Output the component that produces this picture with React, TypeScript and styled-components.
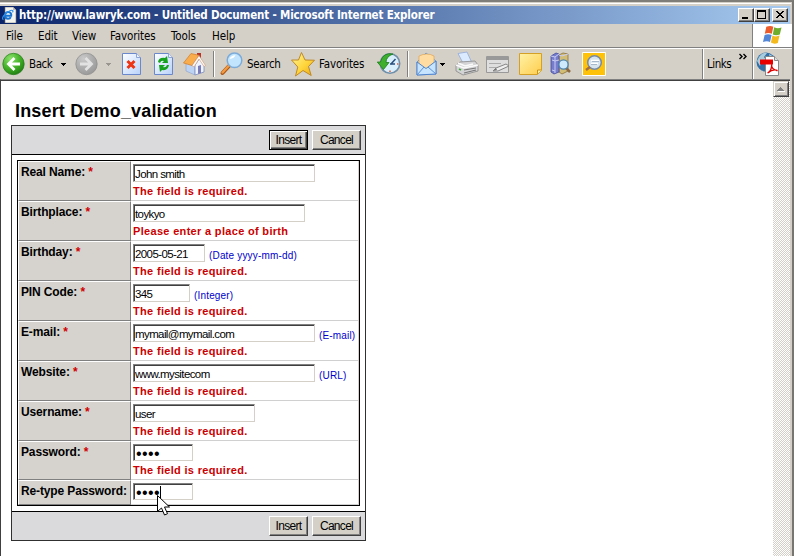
import React from "react";
import styled, { createGlobalStyle } from "styled-components";

const Global = createGlobalStyle`
  * { box-sizing: border-box; }
  html, body { margin: 0; padding: 0; overflow: hidden; }
  body { width: 794px; height: 556px; background: #d4d0c8; font-family: "Liberation Sans", Arial, sans-serif; color: #000; }
`;

const Window = styled.div`
  width: 794px;
  height: 556px;
  display: flex;
  flex-direction: column;
  background: #d4d0c8;
  border-top: 2px solid #807e79;
  border-right: 2px solid #77756f;
  overflow: hidden;
`;

const TitleBar = styled.header`
  height: 22px;
  flex: none;
  margin-right: 1px;
  border-top: 1px solid #d4d0c8;
  box-shadow: inset 0 1px #fff;
  padding-top: 3px;
`;

const TitleStrip = styled.div`
  height: 18px;
  width: 790px;
  display: flex;
  align-items: center;
  padding: 0 2px 0 1px;
  background: linear-gradient(90deg, #0a246a, #a6caf0);
`;

const Title = styled.h1`
  flex: 1;
  margin: 0 0 0 2px;
  font: bold 11.5px/18px "DejaVu Sans Condensed", "DejaVu Sans", sans-serif;
  letter-spacing: -0.16px;
  color: #fff;
  white-space: nowrap;
`;

const CaptionButton = styled.button<{ $gap?: number }>`
  width: 16px;
  height: 14px;
  margin: 0 0 0 ${(p) => p.$gap ?? 0}px;
  padding: 0;
  display: flex;
  border: 1px solid;
  border-color: #fff #404040 #404040 #fff;
  box-shadow: inset -1px -1px #808080;
  background: #d4d0c8;
`;

const MenuBar = styled.nav`
  height: 24px;
  flex: none;
  display: flex;
  border-bottom: 1px solid #808080;
`;

const MenuItem = styled.span<{ $width: number }>`
  width: ${(p) => p.$width}px;
  font: 11.5px/25px "DejaVu Sans Condensed", "DejaVu Sans", sans-serif;
  letter-spacing: -0.12px;
  white-space: nowrap;
`;

const MenuItems = styled.div`
  flex: 1;
  display: flex;
  padding-left: 6px;
`;

const LogoPane = styled.div`
  width: 40px;
  height: 23px;
  border-left: 1px solid #808080;
  background: #fff;
  padding-left: 8px;
`;

const ToolBar = styled.div`
  height: 31px;
  flex: none;
  display: flex;
  align-items: center;
  border-top: 1px solid #fff;
`;

const Tool = styled.span<{ $width: number; $gap?: number }>`
  display: block;
  flex: none;
  width: ${(p) => p.$width}px;
  height: 26px;
  margin-left: ${(p) => p.$gap ?? 0}px;
  svg { display: block; overflow: visible; }
`;

const ToolText = styled.span<{ $width: number; $gap: number; $track?: number }>`
  flex: none;
  width: ${(p) => p.$width}px;
  margin-left: ${(p) => p.$gap}px;
  font: 11.5px/30px "DejaVu Sans Condensed", "DejaVu Sans", sans-serif;
  letter-spacing: ${(p) => p.$track ?? -0.42}px;
  white-space: nowrap;
`;

const Divider = styled.i<{ $gap: number; $full?: boolean }>`
  flex: none;
  width: 2px;
  height: ${(p) => (p.$full ? 30 : 26)}px;
  margin-left: ${(p) => p.$gap}px;
  border-left: 1px solid #808080;
  border-right: 1px solid #fff;
`;

const Viewport = styled.div`
  flex: 1;
  display: flex;
  min-height: 0;
  margin-right: 2px;
  border-top: 1px solid #808080;
  border-left: 1px solid #404040;
  box-shadow: inset 0 1px #404040;
  background: #fff;
  padding-top: 1px;
`;

const Page = styled.main`
  width: 772px;
  padding: 20px 0 0 10px;
`;

const ScrollTrack = styled.div`
  width: 17px;
  background: repeating-conic-gradient(#d4d0c8 0 25%, #fff 0 50%) 0 0 / 2px 2px;
`;

const ScrollButton = styled.div`
  width: 16px;
  height: 16px;
  display: flex;
  border: 1px solid;
  border-color: #d4d0c8 #404040 #404040 #d4d0c8;
  box-shadow: inset 1px 1px #fff, inset -1px -1px #808080;
  background: #d4d0c8;
`;

const Heading = styled.h2`
  margin: 0 0 0 4px;
  height: 24px;
  font-size: 18px;
  line-height: 20px;
  letter-spacing: 0.17px;
`;

const Panel = styled.form`
  width: 355px;
  height: 416px;
  display: flex;
  flex-direction: column;
  border: 1px solid #303030;
`;

const ActionBar = styled.div<{ $bottom?: boolean }>`
  height: 29px;
  flex: none;
  display: flex;
  justify-content: flex-end;
  align-items: flex-start;
  gap: 4px;
  padding: 4px 4px 0 0;
  background: #dadadc;
  border: 0 solid #000;
  border-width: ${(p) => (p.$bottom ? "1px 0 0" : "0 0 1px")};
`;

const PushButton = styled.button<{ $width: number; $primary?: boolean }>`
  width: ${(p) => p.$width}px;
  height: 20px;
  padding: 0;
  font: 12px/14px "Liberation Sans", Arial, sans-serif;
  letter-spacing: -0.7px;
  color: #000;
  background: #d4d0c8;
  border: 1px solid;
  border-color: ${(p) => (p.$primary ? "#000" : "#fff #404040 #404040 #fff")};
  box-shadow: ${(p) =>
    p.$primary
      ? "inset 1px 1px #fff, inset -1px -1px #404040, inset -2px -2px #808080"
      : "inset -1px -1px #808080"};
`;

const Table = styled.div`
  width: 343px;
  height: 346px;
  margin: 5px 0 5px 5px;
  flex: none;
  border: 1px solid #000;
`;

const Row = styled.div<{ $height: number }>`
  height: ${(p) => p.$height}px;
  display: flex;
`;

const Label = styled.label`
  width: 113px;
  padding: 3px 0 0 2px;
  background: #d6d3ce;
  border: 1px solid;
  border-color: #fff #808080 #808080 #fff;
  font-weight: bold;
  font-size: 12px;
  line-height: 15px;
  letter-spacing: -0.13px;
  white-space: nowrap;
`;

const Star = styled.span`
  color: #d00000;
`;

const Field = styled.div`
  position: relative;
  flex: 1;
  padding: 3px 0 0 2px;
  border-right: 1px solid #d4d0c8;
  border-bottom: 1px solid #d0d0d0;
`;

const InputLine = styled.div`
  display: flex;
  align-items: flex-start;
`;

const TextInput = styled.input<{ $width: number; $dots?: boolean }>`
  width: ${(p) => p.$width}px;
  height: ${(p) => (p.$dots ? 17 : 18)}px;
  border: 1px solid;
  border-color: #808080 #d4d0c8 #d4d0c8 #808080;
  box-shadow: inset 1px 1px #404040;
  padding: 2px 0 0 ${(p) => (p.$dots ? 2 : 1)}px;
  outline: 0;
  border-radius: 0;
  background: #fff;
  color: #000;
  font: ${(p) => (p.$dots ? "16px/14px" : "11.5px/14px")} "Liberation Sans", Arial, sans-serif;
  letter-spacing: ${(p) => (p.$dots ? 0.4 : -0.6)}px;
`;

const Hint = styled.span`
  margin: 6px 0 0 4px;
  font-size: 10px;
  line-height: 12px;
  letter-spacing: 0.17px;
  color: #0000cc;
  white-space: nowrap;
`;

const ErrorText = styled.div`
  font-size: 11px;
  line-height: 14px;
  margin-top: 2px;
  font-weight: bold;
  letter-spacing: 0.32px;
  color: #cc0000;
  white-space: nowrap;
`;

const Caret = styled.i`
  position: absolute;
  left: 29px;
  top: 6px;
  width: 1px;
  height: 12px;
  background: #000;
`;

const Pointer = styled.svg`
  position: absolute;
  left: 26px;
  top: 15px;
  z-index: 2;
`;

const IeIcon = () => (
  <svg width="16" height="16" viewBox="0 0 16 16">
    <path d="M4 0h8l3 3v13H4z" fill="#f4f4ee" stroke="#777" strokeWidth=".6" />
    <path d="M12 0v3h3" fill="#bbb" />
    <path d="M9.700 10.200c-.7 2-4.800 2.200-5.600-.3C3.300 7 5.200 5 7.100 5c2.400 0 3.500 1.800 3.100 3.700H4.500" fill="none" stroke="#1874d2" strokeWidth="2" />
    <path d="M2.500 12.700C-.2 12 3 6.200 9.500 3.500c2.500-.8 3 .3 2 1.800" fill="none" stroke="#2e91ec" strokeWidth="1.200" />
  </svg>
);

const WindowsFlag = () => (
  <svg width="24" height="23" viewBox="0 0 24 23">
    <path d="M5.300 2.800q4-1.800 7 0l-1.500 7q-3.500-1.400-7 0z" fill="#ec5b2b" />
    <path d="M13.200 3.200q3.500 1.800 7.300.2l-1.700 7q-3.700 1.600-7 0z" fill="#6fae2d" />
    <path d="M3.600 10.900q3.500-1.400 7 0L9 18.100q-3-1.600-7 0z" fill="#5486d8" />
    <path d="M11.500 11.500q3.500 1.700 7 .1l-1.700 7.400q-3.600 1.500-6.900-.4z" fill="#f4b91d" />
  </svg>
);

const ArrowDisc = ({ forward = false }: { forward?: boolean }) => (
  <svg width="23" height="26" viewBox="0 0 23 26">
    <defs>
      <radialGradient id={forward ? "discGray" : "discGreen"} cx=".35" cy=".25" r=".8">
        <stop stopColor={forward ? "#c9c9c9" : "#8be36c"} />
        <stop offset=".6" stopColor={forward ? "#aaa" : "#40ae25"} />
        <stop offset="1" stopColor={forward ? "#999" : "#207c12"} />
      </radialGradient>
    </defs>
    <circle cx="11.500" cy="13" r="10.700" fill={`url(#${forward ? "discGray" : "discGreen"})`} stroke={forward ? "#8d8d8d" : "#267d1b"} strokeWidth=".7" />
    <path
      d="M12.500 7 6.500 13l6 6M7 13h11"
      transform={forward ? "matrix(-1 0 0 1 23 0)" : undefined}
      fill="none"
      stroke={forward ? "#e2e2e2" : "#fff"}
      strokeWidth="2.800"
    />
  </svg>
);

const DropArrow = ({ color = "#000" }: { color?: string }) => (
  <svg width="5" height="26" viewBox="0 0 5 26" shapeRendering="crispEdges">
    <path d="M0 12h5v1H4v1H3v1H2v-1H1v-1H0z" fill={color} />
  </svg>
);

const Sheet = ({ children }: { children: React.ReactNode }) => (
  <svg width="20" height="26" viewBox="0 0 20 26">
    <defs>
      <linearGradient id="sheet" x2="1" y2="1">
        <stop stopColor="#fff" />
        <stop offset="1" stopColor="#b8d2fa" />
      </linearGradient>
    </defs>
    <path d="M.5 2.500h14l4 4v17H.5z" fill="url(#sheet)" stroke="#6c88cc" />
    <path d="M14.500 2.500v4h4" fill="#eaf2ff" stroke="#7992cc" strokeWidth=".8" />
    {children}
  </svg>
);

const HomeIcon = () => (
  <svg width="24" height="26" viewBox="0 0 24 26">
    <path d="M14 2h4v6h-4z" fill="#b83226" />
    <path d="m3 12 9 3v9L3 20z" fill="#bdd3f4" stroke="#899dc8" strokeWidth=".6" />
    <path d="m12 14 5-7 4 7v7l-9 3z" fill="#eef4fe" stroke="#7a8bbb" strokeWidth=".8" />
    <path d="m15 15 3-1v8l-3 1z" fill="#7a7cb9" />
    <path d="M.5 12 8 2.500l8 1.800L9 14.500z" fill="#f9ad4c" stroke="#ce7b2b" strokeWidth=".7" />
    <path d="m9 14.500 7-10 6.500 10-1.500 1L16 8l-5 8z" fill="#fffaf4" stroke="#cb9674" strokeWidth=".6" />
  </svg>
);

const SearchIcon = () => (
  <svg width="24" height="26" viewBox="0 0 24 26">
    <path d="M9 15 2.500 22" stroke="#a95719" strokeWidth="4" strokeLinecap="round" />
    <path d="M9 14.500 2.500 21.500" stroke="#f49b42" strokeWidth="2.300" strokeLinecap="round" />
    <circle cx="14.500" cy="9.300" r="7.300" fill="#c2e5fd" stroke="#7dabd8" strokeWidth="1.500" />
    <path d="M9.500 8q2-4 6-3.700-1 3-6 3.700" fill="#fff" />
  </svg>
);

const StarIcon = () => (
  <svg width="24" height="26" viewBox="0 0 24 26">
    <defs>
      <linearGradient id="gold" x2="1" y2="1">
        <stop stopColor="#fff6a0" />
        <stop offset=".55" stopColor="#ffd63c" />
        <stop offset="1" stopColor="#eaa713" />
      </linearGradient>
    </defs>
    <path d="m10.500 1.500 3.500 7.500 9.500.2-6 6.300 2.700 9-8.200-5-7.500 5.500 2.300-9L.5 9 7.500 9z" fill="url(#gold)" stroke="#bb8119" strokeWidth=".9" strokeLinejoin="round" />
  </svg>
);

const HistoryIcon = () => (
  <svg width="24" height="26" viewBox="0 0 24 26">
    <circle cx="13" cy="12.500" r="9.700" fill="#d9effc" stroke="#718fa9" strokeWidth="1.600" />
    <path d="M13.500 13.500 18.500 8M13 13h5" stroke="#294d7c" strokeWidth="1.500" />
    <path d="M13 19.500v1.500M20 13h1.500" stroke="#e05c37" strokeWidth="1.500" />
    <path d="M16 3Q6 1 3.500 11H.3l6.200 7.500L12 11.500H9q0-6 7-8.500z" fill="#3eae2e" stroke="#187d18" strokeWidth=".8" />
  </svg>
);

const MailIcon = () => (
  <svg width="22" height="26" viewBox="0 0 22 26">
    <path d="M1 11 10 2l10 8v13L1 24z" fill="#a9d4fc" stroke="#6c9cda" />
    <path d="M3 5q8-4 15 0v10l-8 4-7-5z" fill="#ffdca1" stroke="#e0a353" strokeWidth=".7" />
    <path d="m1 11 9 6.500L20 10v13L1 24z" fill="#c6e4ff" stroke="#467cc6" strokeWidth=".9" />
    <path d="m1 24 7-8M20 23l-8-7" stroke="#5b91d5" />
  </svg>
);

const PrinterIcon = () => (
  <svg width="24" height="26" viewBox="0 0 24 26">
    <path d="M3 2.500 12 1l5 11-8 2z" fill="#dceaff" stroke="#91a9d8" strokeWidth=".8" />
    <path d="m1 14 4-3 15-1 3 4v6L8 24l-7-4z" fill="#d4d4d7" stroke="#888" strokeWidth=".8" />
    <path d="m1 14 8 3 14-3M3 12l7 3 8-2" fill="none" stroke="#fafafa" strokeWidth="1.500" />
    <path d="m9 19 12-2M9 22l12-3" stroke="#777" strokeWidth="1.200" />
    <path d="m4 18 2 1" stroke="#41a735" strokeWidth="1.500" />
  </svg>
);

const EditIcon = () => (
  <svg width="24" height="26" viewBox="0 0 24 26">
    <path d="M.5 5.500h22v16H.5z" fill="#dedede" stroke="#999" />
    <path d="M1 6h21v3H1z" fill="#999" />
    <path d="M3 12.500h12M3 16.500h7" stroke="#ababab" />
    <path d="m7 20 3-3 10-4 3 2-11 5z" fill="#eee" stroke="#858585" />
    <path d="m7 20 3-3 1 2z" fill="#777" />
  </svg>
);

const NoteIcon = () => (
  <svg width="23" height="26" viewBox="0 0 23 26">
    <defs>
      <linearGradient id="note" x2="1" y2="1">
        <stop stopColor="#fff2a5" />
        <stop offset="1" stopColor="#ffcd4d" />
      </linearGradient>
    </defs>
    <path d="M.5 2.500h22v17l-4 4H.5z" fill="url(#note)" stroke="#d4a126" />
    <path d="M18.500 23v-4h4" fill="#fff0a0" stroke="#c9951e" />
  </svg>
);

const ResearchIcon = () => (
  <svg width="22" height="26" viewBox="0 0 22 26">
    <path d="m9 4 4-2 5 1v17l-6 3-3-2z" fill="#d2bd77" stroke="#8a7037" strokeWidth=".8" />
    <path d="m1 5 5-3 3 1v18l-5 2-3-2z" fill="#777dcd" stroke="#454d9f" strokeWidth=".8" />
    <path d="m1 5 4 1 4-3M5 6v16M2 9l3 1 4-1M2 19l3 1M9 4l3 1 6-2" fill="none" stroke="#c8ccf4" />
    <path d="m16 17 4 4" stroke="#8d6842" strokeWidth="2.500" />
    <circle cx="13.500" cy="13.500" r="4.600" fill="#cde9fb" stroke="#4c83af" strokeWidth="1.300" />
  </svg>
);

const ChatIcon = () => (
  <svg width="24" height="26" viewBox="0 0 24 26">
    <path d="M.5 1.500h23v23H.5z" fill="#ffc20a" stroke="#fff" />
    <circle cx="12.500" cy="11.500" r="6.800" fill="#d7e4ee" stroke="#778ba5" strokeWidth="1.500" />
    <path d="m8 16-4 3" stroke="#a36e40" strokeWidth="2.500" />
    <path d="M9 9.500h8M9 12.500h7" stroke="#fff" strokeWidth="1.500" />
    <path d="M10 10.500h7M9 13.500h6" stroke="#9bacc1" strokeWidth=".8" />
  </svg>
);

const PdfIcon = () => (
  <svg width="24" height="26" viewBox="0 0 24 26">
    <circle cx="10" cy="11" r="9.500" fill="#326fa7" />
    <path d="M3 6q4-5 8-4l-3 4 2 3-4 1-2 5-3-5zM13 3q5 2 6 7l-5-2z" fill="#a9ccdd" />
    <path d="M9.500 5.500h9l4 4v15h-13z" fill="#fff" stroke="#888" />
    <path d="M18.500 5.500v4h4" fill="#ddd" stroke="#888" />
    <path d="M4 8.500h13v5H4z" fill="#e80000" />
    <path d="M11.500 22q3-1 4-6 .5-3 0-2 0 4 5 5.500h1q-4-2-10 2.500" fill="none" stroke="#e00000" strokeWidth="1.300" />
  </svg>
);

type Entry = {
  label: string;
  value: string;
  width: number;
  height: number;
  error?: string;
  hint?: string;
  dots?: boolean;
};

const required = "The field is required.";
const entries: Entry[] = [
  { label: "Real Name:", value: "John smith", width: 182, height: 40, error: required },
  { label: "Birthplace:", value: "toykyo", width: 172, height: 40, error: "Please enter a place of birth" },
  { label: "Birthday:", value: "2005-05-21", width: 72, height: 40, error: required, hint: "(Date yyyy-mm-dd)" },
  { label: "PIN Code:", value: "345", width: 57, height: 40, error: required, hint: "(Integer)" },
  { label: "E-mail:", value: "mymail@mymail.com", width: 182, height: 40, error: required, hint: "(E-mail)" },
  { label: "Website:", value: "www.mysitecom", width: 182, height: 40, error: required, hint: "(URL)" },
  { label: "Username:", value: "user", width: 122, height: 40, error: required },
  { label: "Password:", value: "••••", width: 60, height: 39, error: required, dots: true },
  { label: "Re-type Password:", value: "••••", width: 60, height: 25, dots: true },
];

const Actions = ({ bottom = false }: { bottom?: boolean }) => (
  <ActionBar $bottom={bottom}>
    <PushButton type="button" $width={39} $primary={!bottom}>Insert</PushButton>
    <PushButton type="button" $width={49}>Cancel</PushButton>
  </ActionBar>
);

export default function App() {
  return (
    <>
      <Global />
      <Window>
        <TitleBar>
          <TitleStrip>
            <IeIcon />
            <Title>http://www.lawryk.com - Untitled Document - Microsoft Internet Explorer</Title>
            <CaptionButton aria-label="Minimize">
              <svg width="14" height="12"><path d="M3 8h6v2H3z" /></svg>
            </CaptionButton>
            <CaptionButton aria-label="Maximize">
              <svg width="14" height="12" shapeRendering="crispEdges"><path d="M2 1h9v9H2zM3 3v6h7V3z" fillRule="evenodd" /></svg>
            </CaptionButton>
            <CaptionButton aria-label="Close" $gap={2}>
              <svg width="14" height="12" shapeRendering="crispEdges">
                <path d="M3 2h2v1h1v1h2V3h1V2h2v1h-1v1H9v1H8v1h1v1h1v1h1v1H9V8H8V7H6v1H5v1H3V8h1V7h1V6h1V5H5V4H4V3H3z" />
              </svg>
            </CaptionButton>
          </TitleStrip>
        </TitleBar>
        <MenuBar>
          <MenuItems>
            <MenuItem $width={32}>File</MenuItem>
            <MenuItem $width={34}>Edit</MenuItem>
            <MenuItem $width={38}>View</MenuItem>
            <MenuItem $width={61}>Favorites</MenuItem>
            <MenuItem $width={41}>Tools</MenuItem>
            <MenuItem $width={40}>Help</MenuItem>
          </MenuItems>
          <LogoPane><WindowsFlag /></LogoPane>
        </MenuBar>
        <ToolBar>
          <Tool $width={23} $gap={2}><ArrowDisc /></Tool>
          <ToolText $width={24} $gap={4}>Back</ToolText>
          <Tool $width={5} $gap={8}><DropArrow /></Tool>
          <Tool $width={23} $gap={9}><ArrowDisc forward /></Tool>
          <Tool $width={5} $gap={8}><DropArrow color="#999690" /></Tool>
          <Tool $width={20} $gap={11}>
            <Sheet><path d="m5.500 10 7 7m0-7-7 7" stroke="#ed3515" strokeWidth="3" /></Sheet>
          </Tool>
          <Tool $width={20} $gap={12}>
            <Sheet>
              <path d="M4 11q1-5 7-4l2-2 1 7H8l2-2q-3-1-4 2zM15 14q-1 6-7 5l-2 2-1-7h6l-2 2q3 1 4-2z" fill="#15a21d" />
            </Sheet>
          </Tool>
          <Tool $width={24} $gap={9}><HomeIcon /></Tool>
          <Divider $gap={6} />
          <Tool $width={24} $gap={5}><SearchIcon /></Tool>
          <ToolText $width={34} $gap={3} $track={-0.35}>Search</ToolText>
          <Tool $width={24} $gap={10}><StarIcon /></Tool>
          <ToolText $width={46} $gap={4} $track={-0.15}>Favorites</ToolText>
          <Tool $width={24} $gap={12}><HistoryIcon /></Tool>
          <Divider $gap={6} />
          <Tool $width={22} $gap={7}><MailIcon /></Tool>
          <Tool $width={5} $gap={2}><DropArrow /></Tool>
          <Tool $width={24} $gap={10}><PrinterIcon /></Tool>
          <Tool $width={24} $gap={7}><EditIcon /></Tool>
          <Tool $width={23} $gap={9}><NoteIcon /></Tool>
          <Tool $width={22} $gap={8}><ResearchIcon /></Tool>
          <Tool $width={24} $gap={10}><ChatIcon /></Tool>
          <Divider $gap={96} $full />
          <ToolText $width={25} $gap={3} $track={-0.5}>Links</ToolText>
          <Tool $width={9} $gap={7}>
            <svg width="9" height="26" viewBox="0 0 9 26"><path d="m.5 3 2.500 2.500L.5 8m4-5L7 5.500 4.500 8" fill="none" stroke="#000" strokeWidth="1.400" /></svg>
          </Tool>
          <Divider $gap={4} $full />
          <Tool $width={24} $gap={2}><PdfIcon /></Tool>
        </ToolBar>
        <Viewport>
          <Page>
            <Heading>Insert Demo_validation</Heading>
            <Panel>
              <Actions />
              <Table>
                {entries.map((entry, index) => (
                  <Row key={entry.label} $height={entry.height}>
                    <Label>
                      {entry.label}
                      {entry.error && <Star> *</Star>}
                    </Label>
                    <Field>
                      <InputLine>
                        <TextInput readOnly value={entry.value} aria-label={entry.label} $width={entry.width} $dots={entry.dots} />
                        {entry.hint && <Hint>{entry.hint}</Hint>}
                      </InputLine>
                      {entry.error && <ErrorText>{entry.error}</ErrorText>}
                      {index === entries.length - 1 && (
                        <>
                          <Caret />
                          <Pointer width="13" height="22" viewBox="0 0 13 22">
                            <path d="M.5.5v16l4-3.500 3 7 3-1.300-3-6.700h5z" fill="#fff" stroke="#000" />
                          </Pointer>
                        </>
                      )}
                    </Field>
                  </Row>
                ))}
              </Table>
              <Actions bottom />
            </Panel>
          </Page>
          <ScrollTrack>
            <ScrollButton>
              <svg width="14" height="14" shapeRendering="crispEdges">
                <path d="M4 9h7v1H4z" fill="#fff" />
                <path d="M6 5h1v1h1v1h1v1h1v1H3V8h1V7h1V6h1z" fill="#808080" />
              </svg>
            </ScrollButton>
          </ScrollTrack>
        </Viewport>
      </Window>
    </>
  );
}
